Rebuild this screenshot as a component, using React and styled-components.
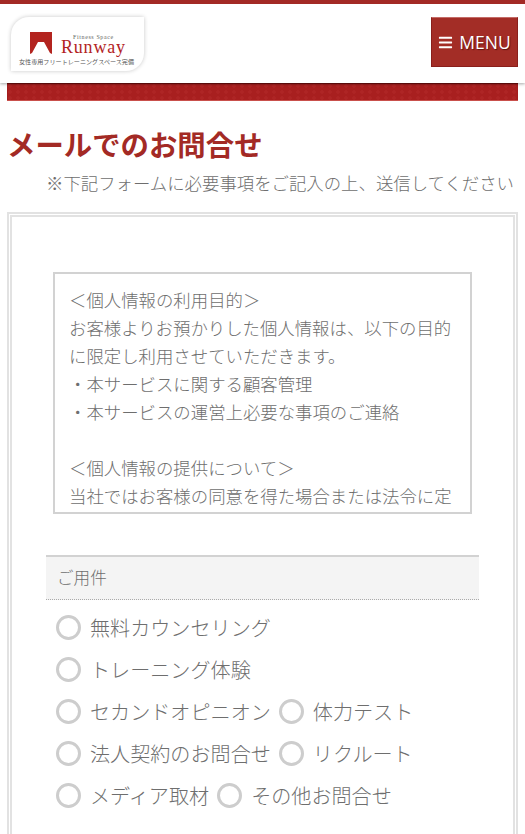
import React from 'react'
import styled, { createGlobalStyle } from 'styled-components'
import { FaBars } from 'react-icons/fa'

const reasons = [
  ['無料カウンセリング'],
  ['トレーニング体験'],
  ['セカンドオピニオン', '体力テスト'],
  ['法人契約のお問合せ', 'リクルート'],
  ['メディア取材', 'その他お問合せ'],
]

const policy = [
  '＜個人情報の利用目的＞',
  'お客様よりお預かりした個人情報は、以下の目的に限定し利用させていただきます。',
  '・本サービスに関する顧客管理',
  '・本サービスの運営上必要な事項のご連絡',
  '',
  '＜個人情報の提供について＞',
  '当社ではお客様の同意を得た場合または法令に定められた場合を除き、取得した個人情報を第三者に提供することはいたしません。',
]

export default function App() {
  return (
    <Page>
      <GlobalStyle />
      <Header>
        <Logo>
          <Brand>
            <svg width="22" height="22" viewBox="0 0 22 22">
              <path d="M0 0H22V22L20 21L14 10H8L2 21L0 22Z" fill="#b3241f" />
            </svg>
            <BrandText>
              <Tagline>Fitness Space</Tagline>
              <BrandName>Runway</BrandName>
            </BrandText>
          </Brand>
          <Caption>女性専用フリートレーニングスペース完備</Caption>
        </Logo>
        <MenuButton>
          <FaBars size={15} />
          MENU
        </MenuButton>
      </Header>
      <Main>
        <Banner />
        <Title>メールでのお問合せ</Title>
        <Note>※下記フォームに必要事項をご記入の上、送信してください</Note>
        <Frame>
          <Policy>
            {policy.map((line, i) => (
              <PolicyLine key={i}>{line || '\u00a0'}</PolicyLine>
            ))}
          </Policy>
          <FieldHead>ご用件</FieldHead>
          <Options>
            {reasons.map((row, i) => (
              <OptionRow key={i}>
                {row.map(label => (
                  <Option key={label}>
                    <Radio />
                    {label}
                  </Option>
                ))}
              </OptionRow>
            ))}
          </Options>
        </Frame>
      </Main>
    </Page>
  )
}

const GlobalStyle = createGlobalStyle`
  html, body {
    margin: 0;
    height: 834px;
    overflow: hidden;
    background: #fff;
  }
  * {
    box-sizing: border-box;
  }
`

const Page = styled.div`
  width: 525px;
  height: 834px;
  overflow: hidden;
  color: #6e6e6e;
  font-family: 'Noto Sans CJK JP', 'Noto Sans', sans-serif;
  font-weight: 300;
`

const Header = styled.header`
  position: relative;
  z-index: 1;
  height: 83px;
  padding: 13px 7px 0 11px;
  display: flex;
  justify-content: space-between;
  align-items: flex-start;
  background: #fff;
  border-top: 4px solid #a32a25;
  box-shadow: 0 1px 3px rgba(0, 0, 0, 0.35);
`

const Logo = styled.div`
  width: 133px;
  height: 54px;
  padding: 15px 0 0 8px;
  background: #fff;
  border-radius: 18px 0 18px 0;
  box-shadow: 0 0 4px rgba(0, 0, 0, 0.22);
`

const Brand = styled.div`
  height: 23px;
  margin: 0 0 0 11px;
  display: flex;
  gap: 9px;
`

const BrandText = styled.div`
  margin-top: 2px;
  font-family: 'Liberation Serif', serif;
  color: #b3241f;
  text-align: center;
`

const Tagline = styled.div`
  font-size: 6px;
  line-height: 6px;
  letter-spacing: 0.6px;
  color: #666;
  font-weight: 400;
`

const BrandName = styled.div`
  font-size: 18px;
  line-height: 15px;
  letter-spacing: 0.8px;
  font-weight: 400;
`

const Caption = styled.div`
  margin-top: 2px;
  font-size: 6.1px;
  line-height: 9px;
  white-space: nowrap;
  color: #555;
  font-weight: 400;
`

const MenuButton = styled.button`
  width: 87px;
  height: 50px;
  padding: 0;
  display: flex;
  align-items: center;
  justify-content: center;
  gap: 6px;
  color: #fff;
  font-family: 'Open Sans', sans-serif;
  font-size: 17.5px;
  text-shadow: 1px 1px 1px #5f1410;
  background: #a32d26;
  border: 1px solid #8a1f1b;
  border-top-color: #c46b66;
`

const Main = styled.main`
  padding: 0 7px;
`

const Banner = styled.div`
  height: 18px;
  background-color: #a81f1f;
  background-image: radial-gradient(circle at 3px 3px, #ae2525 1.5px, transparent 2px);
  background-size: 8px 6px;
  border-bottom: 1px solid #c9504c;
  box-shadow: inset 0 1px 1px #6d0f0f;
`

const Title = styled.h1`
  margin: 23px 0 0;
  height: 40px;
  color: #a32a25;
  font-family: 'Noto Sans CJK JP', sans-serif;
  font-size: 28.4px;
  line-height: 40px;
  font-weight: 700;
  white-space: nowrap;
`

const Note = styled.p`
  margin: 6px 0 0 39px;
  font-size: 17.4px;
  line-height: 25px;
  white-space: nowrap;
`

const Frame = styled.section`
  height: 640px;
  margin-top: 17px;
  padding: 55px 33px 0 34px;
  border: 5px double #e2e2e2;
`

const Policy = styled.div`
  width: 419px;
  height: 242px;
  margin-left: 7px;
  padding: 12px 14px 0;
  overflow: hidden;
  border: 2px solid #d2d2d2;
  font-size: 17.4px;
  line-height: 28px;
`

const PolicyLine = styled.div``

const FieldHead = styled.div`
  width: 433px;
  height: 45px;
  margin-top: 41px;
  padding-left: 11px;
  display: flex;
  align-items: center;
  font-size: 16.6px;
  line-height: 24px;
  padding-bottom: 2px;
  background: #f4f4f4;
  border-top: 2px solid #d2d2d2;
  border-bottom: 1px dotted #aaa;
`

const Options = styled.div`
  margin-top: 6px;
  padding-left: 10px;
`

const OptionRow = styled.div`
  height: 42px;
  display: flex;
  align-items: center;
  gap: 8px;
`

const Option = styled.label`
  display: flex;
  align-items: center;
  gap: 9px;
  font-size: 20.1px;
  white-space: nowrap;
`

const Radio = styled.span`
  width: 25px;
  height: 25px;
  flex: none;
  background: #fff;
  border: 3px solid #cdcdcd;
  border-radius: 50%;
`
